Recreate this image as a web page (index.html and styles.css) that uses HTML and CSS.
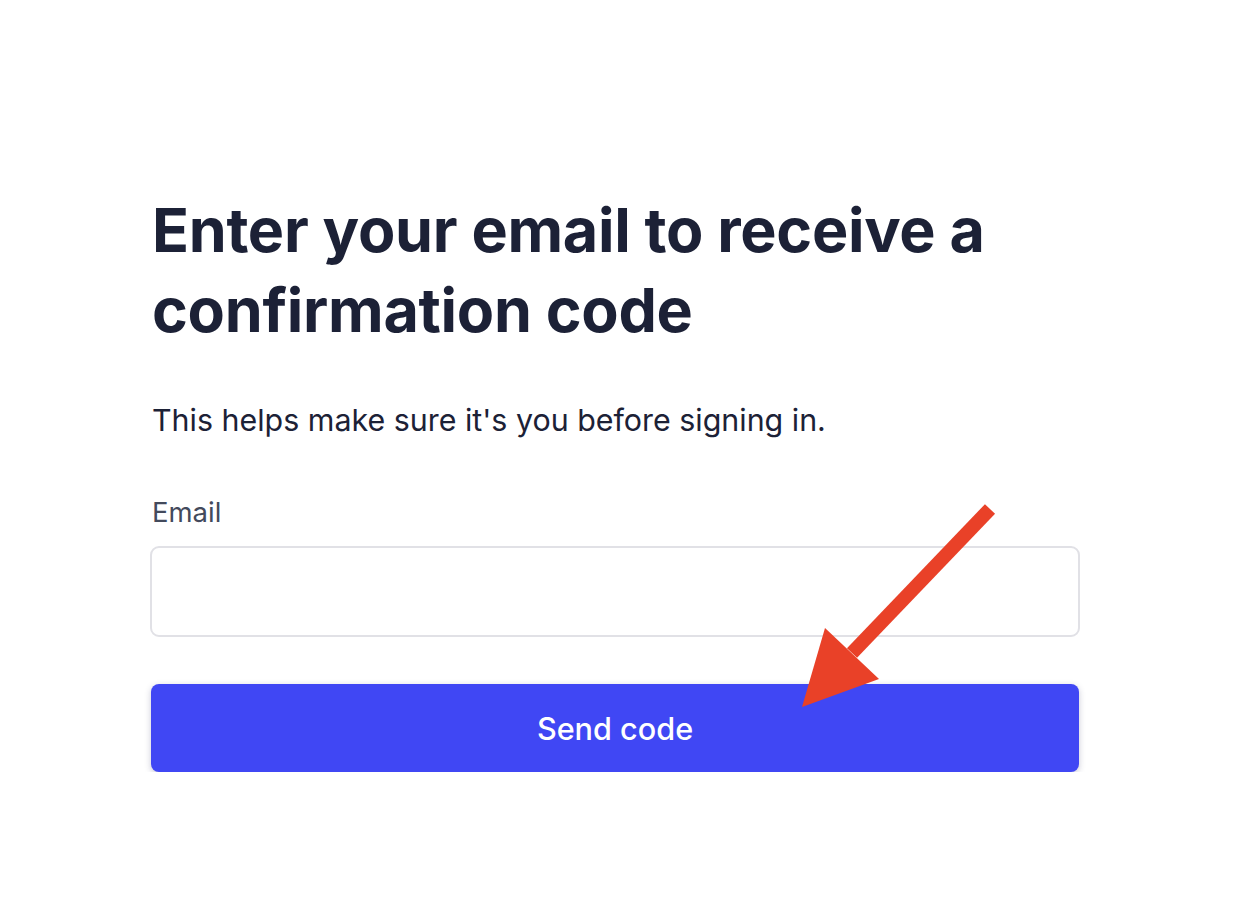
FILE: index.html
```html
<!DOCTYPE html>
<html lang="en">
<head>
    <meta charset="UTF-8">
    <meta name="viewport" content="width=device-width, initial-scale=1.0">
    <title>Sign in</title>
    <link rel="stylesheet" href="styles.css">
</head>
<body>
    <div class="container">
        <h1>Enter your email to receive a confirmation code</h1>
        <p class="lead">This helps make sure it's you before signing in.</p>
        <div class="form-group">
            <label for="email">Email</label>
            <input type="email" id="email">
        </div>
        <button type="button">Send code</button>
    </div>

    <svg class="arrow" width="1248" height="922" viewBox="0 0 1248 922">
        <line x1="990" y1="509" x2="852" y2="653" stroke="#e94128" stroke-width="14"/>
        <polygon points="802,707 825,628 879,679" fill="#e94128"/>
    </svg>
</body>
</html>
```

FILE: styles.css
```css
body {
    font-family: Inter, "Noto Sans", sans-serif;
    background-color: #fff;
    margin: 0;
    color: #1c2136;
}
.container {
    width: 930px;
    margin-left: 150px;
    padding-top: 190px;
}
h1 {
    font-size: 61px;
    line-height: 80px;
    font-weight: 700;
    letter-spacing: -0.3px;
    margin: 0 0 0 2px;
}
.lead {
    font-size: 30.4px;
    line-height: 40px;
    margin: 50px 0 0 2px;
}
.form-group {
    margin-top: 54px;
}
label {
    display: block;
    font-size: 27.5px;
    line-height: 36px;
    color: #434a5c;
    margin: 0 0 16px 2px;
}
input {
    display: block;
    box-sizing: border-box;
    width: 100%;
    height: 91px;
    border: 2px solid #e1e1e6;
    border-radius: 9px;
    background: #fff;
}
button {
    display: block;
    width: 928px;
    height: 88px;
    margin: 47px 0 0 1px;
    border: none;
    border-radius: 8px;
    background-color: #4047f4;
    color: #fff;
    font-family: Inter, "Noto Sans", sans-serif;
    font-size: 30.6px;
    font-weight: 500;
    box-shadow: 0 2px 6px rgba(40, 40, 90, 0.25);
    cursor: pointer;
}
.arrow {
    position: absolute;
    left: 0;
    top: 0;
    pointer-events: none;
}
```
